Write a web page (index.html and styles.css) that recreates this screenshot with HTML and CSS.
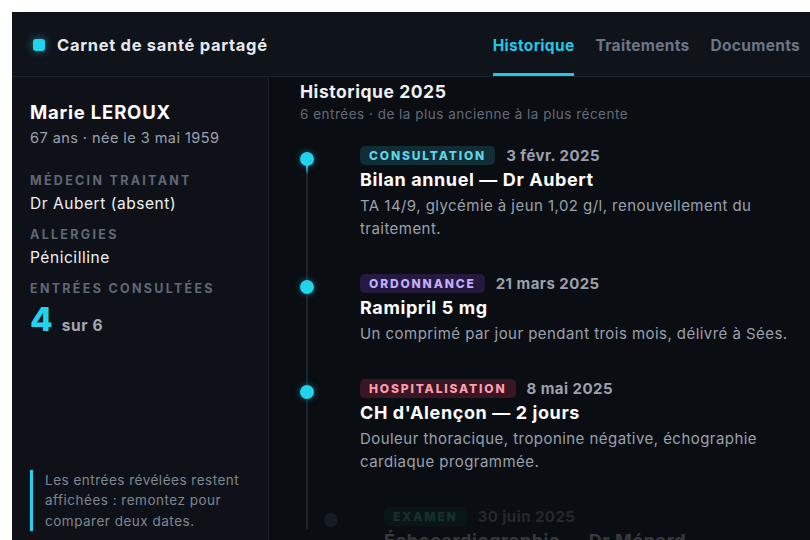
FILE: index.html
```html
<!DOCTYPE html>
<html lang="fr">
<head>
<meta charset="utf-8">
<title>Carnet de santé partagé</title>
<link rel="stylesheet" href="styles.css">
</head>
<body>
<div class="app">
  <header class="topbar">
    <div class="brand">
      <span class="brand-mark"></span>
      <span class="brand-name">Carnet de santé partagé</span>
    </div>
    <nav class="tabs">
      <a class="tab tab-active">Historique</a>
      <a class="tab">Traitements</a>
      <a class="tab">Documents</a>
    </nav>
  </header>
  <div class="body">
    <aside class="sidebar">
      <div class="patient-name">Marie LEROUX</div>
      <div class="patient-age">67 ans · née le 3 mai 1959</div>
      <div class="field-label field-first">Médecin traitant</div>
      <div class="field-value">Dr Aubert (absent)</div>
      <div class="field-label">Allergies</div>
      <div class="field-value">Pénicilline</div>
      <div class="field-label">Entrées consultées</div>
      <div class="counter"><span class="counter-num">4</span><span class="counter-total">sur 6</span></div>
      <p class="note">Les entrées révélées restent affichées : remontez pour comparer deux dates.</p>
    </aside>
    <main class="main">
      <h1 class="main-title">Historique 2025</h1>
      <div class="main-sub">6 entrées · de la plus ancienne à la plus récente</div>
      <div class="timeline">
        <div class="timeline-line"></div>
        <div class="entry">
          <span class="dot"></span>
          <div class="entry-head"><span class="badge badge-consult">Consultation</span><span class="date">3 févr. 2025</span></div>
          <div class="entry-title">Bilan annuel — Dr Aubert</div>
          <div class="entry-desc">TA 14/9, glycémie à jeun 1,02 g/l, renouvellement du traitement.</div>
        </div>
        <div class="entry">
          <span class="dot"></span>
          <div class="entry-head"><span class="badge badge-ordo">Ordonnance</span><span class="date">21 mars 2025</span></div>
          <div class="entry-title">Ramipril 5 mg</div>
          <div class="entry-desc">Un comprimé par jour pendant trois mois, délivré à Sées.</div>
        </div>
        <div class="entry">
          <span class="dot"></span>
          <div class="entry-head"><span class="badge badge-hosp">Hospitalisation</span><span class="date">8 mai 2025</span></div>
          <div class="entry-title">CH d'Alençon — 2 jours</div>
          <div class="entry-desc">Douleur thoracique, troponine négative, échographie cardiaque programmée.</div>
        </div>
        <div class="entry entry-hidden">
          <span class="dot"></span>
          <div class="entry-head"><span class="badge badge-exam">Examen</span><span class="date">30 juin 2025</span></div>
          <div class="entry-title">Échocardiographie — Dr Ménard</div>
          <div class="entry-desc">Fraction d'éjection conservée, pas d'anomalie significative.</div>
        </div>
      </div>
    </main>
  </div>
</div>
</body>
</html>
```

FILE: styles.css
```css
html { background: #ffffff; }
body {
  margin: 12px 0 0 12px;
  font-family: Inter, "Noto Sans", "Liberation Sans", sans-serif;
  overflow: hidden;
}
.app {
  width: 798px;
  height: 528px;
  display: flex;
  flex-direction: column;
  background: #0a0d12;
  color: #e8ebf0;
  overflow: hidden;
}
.topbar {
  height: 64px;
  flex: 0 0 64px;
  display: flex;
  align-items: stretch;
  justify-content: space-between;
  padding: 0 10px 0 21px;
  background: #0f131a;
  border-bottom: 1px solid #1d232c;
}
.brand {
  display: flex;
  align-items: center;
  gap: 12px;
  padding-top: 2px;
}
.brand-mark {
  width: 12px;
  height: 12px;
  border-radius: 3px;
  background: #22d3ee;
  box-shadow: 0 0 8px rgba(34, 211, 238, 0.55);
}
.brand-name {
  font-size: 16.5px;
  font-weight: 700;
  letter-spacing: 0.7px;
  color: #e6e9ee;
}
.tabs {
  display: flex;
  gap: 21px;
}
.tab {
  display: flex;
  align-items: center;
  padding-top: 5px;
  border-bottom: 3px solid transparent;
  font-size: 15.5px;
  font-weight: 700;
  letter-spacing: 0.3px;
  color: #6b7586;
}
.tab-active {
  color: #22c7e4;
  border-bottom-color: #22c7e4;
}
.body {
  flex: 1;
  display: flex;
  min-height: 0;
}
.sidebar {
  width: 257px;
  flex: 0 0 257px;
  box-sizing: border-box;
  display: flex;
  flex-direction: column;
  padding: 23px 18px 9px 18px;
  background: #0e1218;
  border-right: 1px solid #1b2129;
}
.patient-name {
  font-size: 18.5px;
  line-height: 24px;
  font-weight: 700;
  letter-spacing: 0.8px;
  color: #ffffff;
}
.patient-age {
  margin-top: 4px;
  font-size: 14.5px;
  line-height: 20px;
  letter-spacing: 0.45px;
  color: #9aa1ad;
}
.field-label {
  margin-top: 12px;
  font-size: 12.5px;
  line-height: 16px;
  font-weight: 700;
  letter-spacing: 2.3px;
  text-transform: uppercase;
  color: #5f6877;
}
.field-first { margin-top: 25px; }
.field-value {
  margin-top: 4px;
  font-size: 15.5px;
  line-height: 22px;
  letter-spacing: 0.55px;
  color: #eef0f3;
}
.counter {
  margin-top: 2px;
  display: flex;
  align-items: baseline;
  gap: 9px;
}
.counter-num {
  font-size: 33px;
  line-height: 40px;
  font-weight: 800;
  color: #22d3ee;
}
.counter-total {
  font-size: 15.5px;
  font-weight: 700;
  letter-spacing: 0.6px;
  color: #a1a8b3;
}
.note {
  margin: auto 0 0 0;
  padding: 0 0 0 12px;
  border-left: 3px solid #22d3ee;
  font-size: 13.5px;
  line-height: 20.5px;
  letter-spacing: 0.5px;
  color: #7e8693;
}
.main {
  flex: 1;
  min-width: 0;
  padding: 4px 11px 0 31px;
  overflow: hidden;
}
.main-title {
  margin: 0;
  font-size: 17.5px;
  line-height: 22px;
  font-weight: 700;
  letter-spacing: 0.55px;
  color: #eef0f3;
}
.main-sub {
  margin-top: 2px;
  font-size: 13.5px;
  line-height: 18px;
  letter-spacing: 0.5px;
  color: #636c7a;
}
.timeline {
  position: relative;
  margin-top: 23px;
}
.timeline-line {
  position: absolute;
  left: 6px;
  top: 13px;
  width: 2px;
  height: 370px;
  background: linear-gradient(#3ab8e6 0, #3ab8e6 8px, #1c232c 16px, #1c232c 100%);
}
.entry {
  position: relative;
  padding: 0 0 34px 60px;
}
.dot {
  position: absolute;
  left: 0;
  top: 6px;
  width: 14px;
  height: 14px;
  border-radius: 50%;
  background: #22d3ee;
  box-shadow: 0 0 7px rgba(34, 211, 238, 0.45);
}
.entry-head {
  display: flex;
  align-items: center;
  gap: 11px;
  height: 19px;
}
.badge {
  height: 19px;
  line-height: 19px;
  padding: 0 9px;
  border-radius: 5px;
  font-size: 12px;
  font-weight: 800;
  letter-spacing: 1.85px;
  text-transform: uppercase;
}
.badge-consult { background: #112d36; color: #5ed6e6; }
.badge-ordo { background: #25193f; color: #c3aefc; }
.badge-hosp { background: #3a1522; color: #fb9fb0; }
.badge-exam { background: #0f3a33; color: #4fd1b0; }
.date {
  font-size: 15px;
  font-weight: 700;
  letter-spacing: 0.45px;
  color: #9aa1ad;
}
.entry-title {
  margin-top: 3px;
  font-size: 18px;
  line-height: 24px;
  font-weight: 700;
  letter-spacing: 0.6px;
  color: #ffffff;
}
.entry-desc {
  margin-top: 2px;
  font-size: 15px;
  line-height: 23px;
  letter-spacing: 0.45px;
  color: #9aa1ad;
}
.entry-hidden {
  opacity: 0.18;
  transform: translateX(24px);
}
.entry-hidden .dot {
  background: #4a6272;
  box-shadow: none;
}
```
